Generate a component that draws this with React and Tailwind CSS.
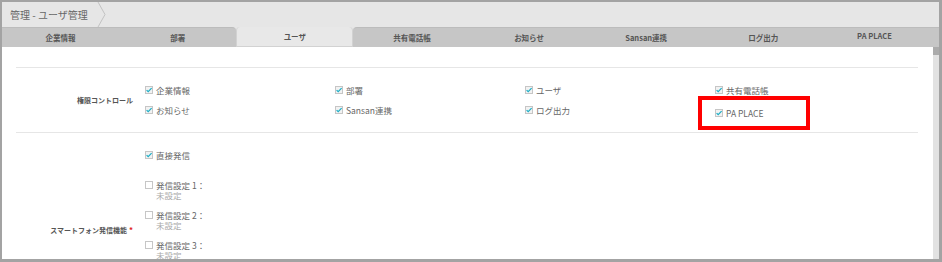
import React from "react";

function Box({ checked }) {
  return (
    <svg width="8" height="8" viewBox="0 0 8 8" className="shrink-0">
      <rect x="0.5" y="0.5" width="7" height="7" fill={checked ? "#f2f2f2" : "#ffffff"} stroke="#c6c6c6" strokeWidth="1" />
      {checked && (
        <polyline points="1.6,4.1 3.2,5.7 6.6,2.2" fill="none" stroke="#1aaec6" strokeWidth="1.2" />
      )}
    </svg>
  );
}

function Item({ label, checked = true }) {
  return (
    <div className="h-[12px] flex items-center gap-[3px]">
      <Box checked={checked} />
      <span className="text-[8.5px] leading-[12px] text-[#666] whitespace-nowrap">{label}</span>
    </div>
  );
}

function Setting({ n }) {
  return (
    <div className="flex flex-col">
      <div className="h-[10px] flex items-center gap-[3px]">
        <Box checked={false} />
        <span className="text-[8.5px] leading-[10px] text-[#666] whitespace-nowrap">発信設定 {n}：</span>
      </div>
      <div className="h-[10px] pl-[11px] text-[8.5px] leading-[10px] text-[#aaa] whitespace-nowrap">未設定</div>
    </div>
  );
}

const tabs = ["企業情報", "部署", "ユーザ", "共有電話帳", "お知らせ", "Sansan連携", "ログ出力", "PA PLACE"];

export default function App() {
  return (
    <div className="w-[942px] h-[262px] overflow-hidden bg-[#a3a3a3] pt-[2px] pl-[2px] pr-[3px] pb-[3px] font-['Noto_Sans_CJK_JP','Noto_Sans',sans-serif]">
      <div className="h-full flex flex-col bg-white">
        {/* header */}
        <div className="h-[25px] shrink-0 bg-[#e6e6e6] flex items-center">
          <span className="pl-[8px] text-[10px] text-[#666] whitespace-nowrap">管理 - ユーザ管理</span>
          <svg width="10" height="25" viewBox="0 0 10 25" className="ml-[9px]">
            <polyline points="1,0 8,12.5 1,25" fill="none" stroke="#c2c2c2" strokeWidth="1" />
          </svg>
        </div>
        {/* tabs */}
        <div className="h-[20px] shrink-0 bg-[#e6e6e6] grid grid-cols-8">
          {tabs.map((t, i) => {
            if (i === 2) {
              return (
                <div key={t} className="bg-[#e8e8e8] rounded-t-[4px] border border-[#d2d2d2] border-t-0 flex items-center justify-center text-[7.5px] font-bold text-[#555]">
                  {t}
                </div>
              );
            }
            const round = i === 1 ? "rounded-tr-[4px]" : i === 3 ? "rounded-tl-[4px]" : "";
            const shift = i === 7 ? "pr-[12px] pb-[3px]" : "";
            return (
              <div key={t} className={`bg-[#c6c6c6] border-t border-[#bcbcbc] flex items-center justify-center text-[7.5px] font-bold text-[#555] ${round} ${shift}`}>
                {t}
              </div>
            );
          })}
        </div>
        {/* content */}
        <div className="flex-1 min-h-0 flex">
          <div className="flex-1 min-w-0 overflow-hidden pt-[20px] pl-[14px] pr-[15px]">
            {/* permissions */}
            <div className="border-t border-[#e6e6e6] flex">
              <div className="w-[117px] shrink-0 flex items-center justify-end text-[7px] font-bold text-[#555] whitespace-nowrap">
                権限コントロール
              </div>
              <div className="pl-[12px] pt-[16px] pb-[16px] grid grid-cols-[190px_190px_190px_190px] gap-y-[8px]">
                <Item label="企業情報" />
                <Item label="部署" />
                <Item label="ユーザ" />
                <Item label="共有電話帳" />
                <Item label="お知らせ" />
                <Item label="Sansan連携" />
                <Item label="ログ出力" />
                <div className="relative h-[12px]">
                  <div className="translate-y-[3px]">
                    <Item label="PA PLACE" />
                  </div>
                  <div className="absolute left-[-17px] top-[-8px] w-[112px] h-[34px] border-4 border-[#ff0000]" />
                </div>
              </div>
            </div>
            {/* smartphone */}
            <div className="border-t border-[#e6e6e6] flex">
              <div className="w-[117px] shrink-0 pt-[92px] flex justify-end items-start text-[7px] font-bold text-[#555] whitespace-nowrap leading-[10px]">
                スマートフォン発信機能
                <span className="text-[#e02020] ml-[2px] text-[8px] leading-[10px]">*</span>
              </div>
              <div className="pl-[12px] pt-[16px] flex flex-col">
                <Item label="直接発信" />
                <div className="mt-[19px] flex flex-col gap-[10px]">
                  <Setting n="1" />
                  <Setting n="2" />
                  <Setting n="3" />
                </div>
              </div>
            </div>
          </div>
          {/* scrollbar */}
          <div className="w-[6px] shrink-0 bg-[#e2e2e2] flex flex-col">
            <div className="h-[8px] bg-[#ababab]" />
          </div>
        </div>
      </div>
    </div>
  );
}
